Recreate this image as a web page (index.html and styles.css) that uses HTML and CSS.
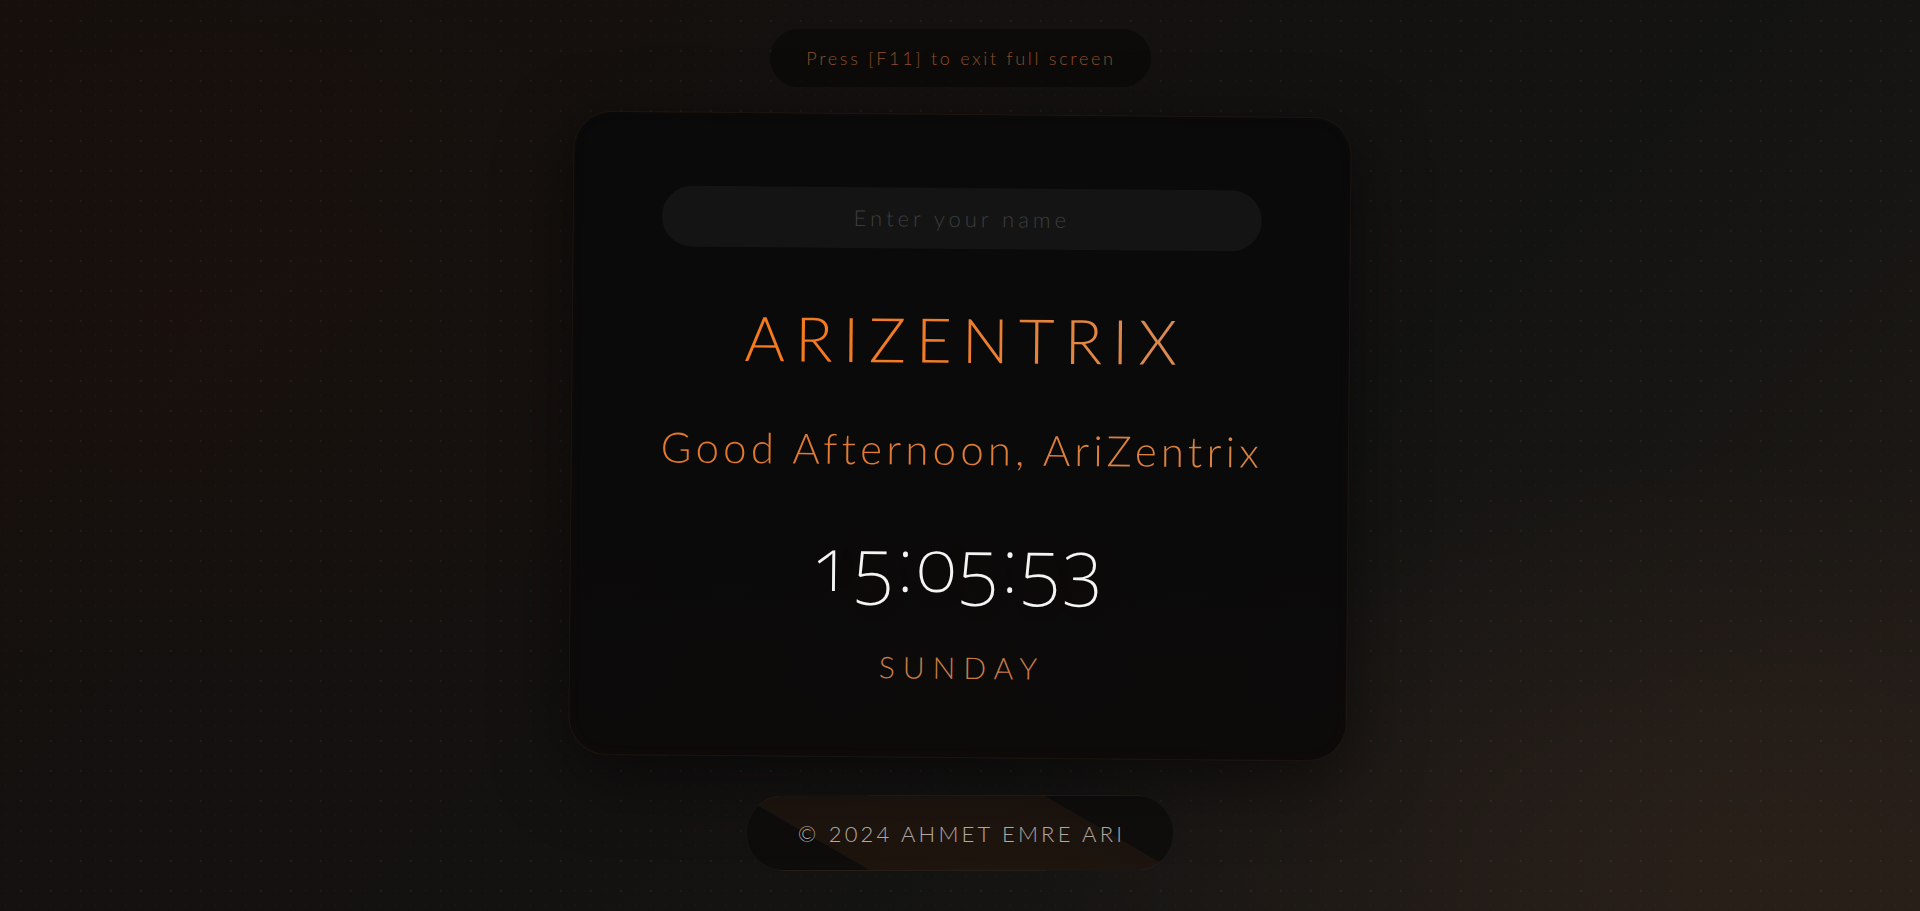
FILE: index.html
```html
<!DOCTYPE html>
<html lang="en">
<head>
<meta charset="utf-8">
<title>ArîZentrix Clock</title>
<link rel="stylesheet" href="styles.css">
</head>
<body>
  <div class="page">
    <div class="hint">Press [F11] to exit full screen</div>
    <main class="card">
      <input class="name-input" type="text" placeholder="Enter your name">
      <h1 class="title">ARIZENTRIX</h1>
      <p class="greeting">Good Afternoon, AriZentrix</p>
      <div class="clock">15:05:53</div>
      <div class="day">SUNDAY</div>
    </main>
    <footer class="footer">© 2024 AHMET EMRE ARI</footer>
  </div>
</body>
</html>
```

FILE: styles.css
```css
html, body {
  margin: 0;
  padding: 0;
  height: 100%;
}

body {
  background-color: #141210;
  background-image:
    radial-gradient(circle, rgba(255,255,255,0.035) 1.2px, transparent 1.6px),
    radial-gradient(circle, rgba(255,255,255,0.02) 0.8px, transparent 1.2px),
    radial-gradient(ellipse 40% 60% at 10% 35%, rgba(30,17,10,0.35), transparent 70%),
    radial-gradient(ellipse 50% 60% at 92% 95%, rgba(44,33,26,0.8), transparent 75%),
    linear-gradient(135deg, #160f0c 0%, #141110 40%, #131312 62%, #201a16 100%);
  background-size: 30px 30px, 15px 15px, 100% 100%, 100% 100%, 100% 100%;
  background-position: 6px 6px, 13px 13px, 0 0, 0 0, 0 0;
  font-family: "Lato", "Liberation Sans", sans-serif;
  overflow: hidden;
}

.page {
  display: flex;
  flex-direction: column;
  align-items: center;
  padding-top: 29px;
}

.hint {
  width: 381px;
  height: 58px;
  box-sizing: border-box;
  border-radius: 29px;
  background: rgba(10, 9, 8, 0.75);
  display: flex;
  align-items: center;
  justify-content: center;
  color: #8e4e2c;
  font-size: 18px;
  font-weight: 300;
  letter-spacing: 2.7px;
  padding-left: 2px;
}

.card {
  margin-top: 27px;
  width: 778px;
  height: 644px;
  box-sizing: border-box;
  padding: 73px 40px 0;
  border-radius: 38px;
  background: linear-gradient(180deg, #0a0a0a 0%, #0b0a0a 70%, #0d0b0a 100%);
  border: 1px solid rgba(120, 80, 50, 0.14);
  box-shadow:
    inset 0 0 14px rgba(120, 60, 20, 0.04),
    0 20px 70px rgba(0, 0, 0, 0.5);
  transform: rotate(0.5deg);
  display: flex;
  flex-direction: column;
  align-items: center;
}

.name-input {
  display: block;
  width: 600px;
  height: 61px;
  box-sizing: border-box;
  border: none;
  outline: none;
  border-radius: 31px;
  background: #141414;
  text-align: center;
  font-family: "Lato", "Liberation Sans", sans-serif;
  font-size: 22px;
  font-weight: 300;
  letter-spacing: 4px;
  color: #9a9a9a;
}

.name-input::placeholder {
  color: #3d3d3d;
}

.title {
  margin: 59px 0 0;
  font-size: 62px;
  line-height: 62px;
  font-weight: 300;
  letter-spacing: 10px;
  padding-left: 10px;
  background: linear-gradient(90deg, #f7791c 0%, #f07c28 45%, #d98b55 100%);
  -webkit-background-clip: text;
  background-clip: text;
  color: transparent;
}

.greeting {
  margin: 58px 0 0;
  white-space: nowrap;
  font-size: 42px;
  line-height: 42px;
  font-weight: 300;
  letter-spacing: 4.2px;
  padding-left: 4px;
  background: linear-gradient(90deg, #e4762a 0%, #e07c35 50%, #da8444 100%);
  -webkit-background-clip: text;
  background-clip: text;
  color: transparent;
}

.clock {
  margin-top: 56px;
  font-family: "Noto Sans", "Lato", sans-serif;
  font-feature-settings: "onum" 1;
  font-variant-numeric: oldstyle-nums;
  font-size: 75px;
  line-height: 75px;
  font-weight: 200;
  color: #f4f4f4;
  letter-spacing: 2.5px;
  text-shadow: 0 0 40px rgba(255, 140, 60, 0.12);
}

.day {
  margin-top: 51px;
  font-size: 30px;
  line-height: 30px;
  font-weight: 300;
  letter-spacing: 8px;
  padding-left: 8px;
  color: #c97b47;
}

.footer {
  margin-top: 37px;
  width: 428px;
  height: 76px;
  box-sizing: border-box;
  border-radius: 38px;
  border: 1px solid rgba(255, 255, 255, 0.04);
  background: linear-gradient(30deg, #0d0c0b 0%, #0e0d0c 22%, #1d140e 22.2%, #1f150f 50%, #1c140f 76.8%, #0f0e0d 77%, #0f0e0d 100%);
  display: flex;
  align-items: center;
  justify-content: center;
  color: #b7ada5;
  font-size: 22px;
  font-weight: 300;
  letter-spacing: 3.2px;
  padding-left: 3px;
}
```
